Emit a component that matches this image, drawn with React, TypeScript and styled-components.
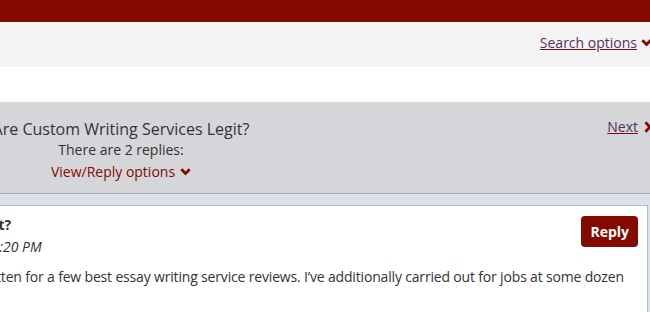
import React from "react";
import styled, { createGlobalStyle } from "styled-components";

const RED = "#840a00";
const SHIFT = 260;

const Global = createGlobalStyle`
  html, body { margin: 0; padding: 0; background: #fff; overflow: hidden; }
  body { font-family: "Open Sans", "DejaVu Sans", sans-serif; color: #333; }
`;

const Page = styled.div`
  width: ${650 + SHIFT + 2}px;
  margin-left: -${SHIFT}px;
`;

const TopBar = styled.div`
  height: 22px;
  background: ${RED};
`;

const SearchBar = styled.div`
  height: 45px;
  box-sizing: border-box;
  background: #f4f4f4;
  display: flex;
  justify-content: flex-end;
  align-items: center;
  padding-bottom: 4px;
  margin-bottom: 35px;
`;

const Link = styled.a`
  font-size: 14px;
  line-height: 20px;
  color: #55305f;
  text-decoration: underline;
  text-decoration-color: ${RED};
  cursor: pointer;
`;

const IconWrap = styled.span<{ $gap?: number }>`
  display: inline-flex;
  margin-left: ${(p) => p.$gap ?? 4}px;
`;

const LinkGroup = styled.div<{ $top?: number }>`
  display: flex;
  align-items: center;
  padding-top: ${(p) => p.$top ?? 0}px;
`;

const Header = styled.div`
  background: #d5d6d9;
  border-bottom: 1px solid #a9a9a9;
  display: flex;
  justify-content: space-between;
  align-items: flex-start;
  padding: 14px 0 11px;
`;

const TitleColumn = styled.div`
  width: ${2 * (121 + SHIFT)}px;
  text-align: center;
  white-space: nowrap;
  padding-top: 2px;
`;

const ThreadTitle = styled.div`
  font-size: 16px;
  line-height: 22px;
  color: #333;
`;

const Replies = styled.div`
  font-size: 14px;
  line-height: 20px;
  color: #333;
`;

const Options = styled.div`
  font-size: 14px;
  line-height: 20px;
  color: ${RED};
  display: inline-flex;
  align-items: center;
`;

const Thread = styled.div`
  background: #dce2ec;
  padding: 11px 4px 0 11px;
`;

const Card = styled.div`
  background: #fff;
  border: 1px solid #b9b9b9;
  padding: 9px 9px 40px 17px;
`;

const PostHead = styled.div`
  display: flex;
  justify-content: space-between;
  align-items: flex-start;
`;

const PostTitle = styled.div`
  font-size: 14px;
  line-height: 20px;
  font-weight: 700;
  color: #333;
`;

const PostDate = styled.div`
  font-size: 14px;
  line-height: 20px;
  font-style: italic;
  color: #333;
  margin-top: 2px;
`;

const ReplyButton = styled.button`
  margin-top: 1px;
  height: 31px;
  padding: 0 9px;
  border: none;
  border-radius: 4px;
  background: ${RED};
  color: #fff;
  font-family: "Open Sans", sans-serif;
  font-weight: 700;
  font-size: 14px;
`;

const Body = styled.p`
  margin: 10px 0 0;
  font-size: 14px;
  line-height: 20px;
  letter-spacing: -0.17px;
  color: #333;
  white-space: nowrap;
`;

const ChevronDown = () => (
  <svg width="11" height="8" viewBox="0 0 11 8" aria-hidden="true">
    <polyline points="1.3,1.3 5.5,5.6 9.7,1.3" fill="none" stroke={RED} strokeWidth="2.8" />
  </svg>
);

const ChevronRight = () => (
  <svg width="8" height="12" viewBox="0 0 8 12" aria-hidden="true">
    <polyline points="1.5,1.3 5.8,6 1.5,10.7" fill="none" stroke={RED} strokeWidth="2.8" />
  </svg>
);

export default function App() {
  return (
    <>
      <Global />
      <Page>
        <TopBar />
        <SearchBar>
          <LinkGroup>
            <Link>Search options</Link>
            <IconWrap $gap={4}><ChevronDown /></IconWrap>
          </LinkGroup>
        </SearchBar>
        <Header>
          <TitleColumn>
            <ThreadTitle>Are Custom Writing Services Legit?</ThreadTitle>
            <Replies>There are 2 replies:</Replies>
            <Options>
              View/Reply options
              <IconWrap $gap={5}><ChevronDown /></IconWrap>
            </Options>
          </TitleColumn>
          <LinkGroup $top={1}>
            <Link>Next</Link>
            <IconWrap $gap={6}><ChevronRight /></IconWrap>
          </LinkGroup>
        </Header>
        <Thread>
          <Card>
            <PostHead>
              <div>
                <PostTitle>Are Custom Writing Services Legit?</PostTitle>
                <PostDate>Posted by Jessie Lee on 12/7/2019, 11:20 PM</PostDate>
              </div>
              <ReplyButton>Reply</ReplyButton>
            </PostHead>
            <Body>
              Over the past many years I have written for a few best essay writing service reviews. I’ve additionally carried out for jobs at some dozen
            </Body>
          </Card>
        </Thread>
      </Page>
    </>
  );
}
